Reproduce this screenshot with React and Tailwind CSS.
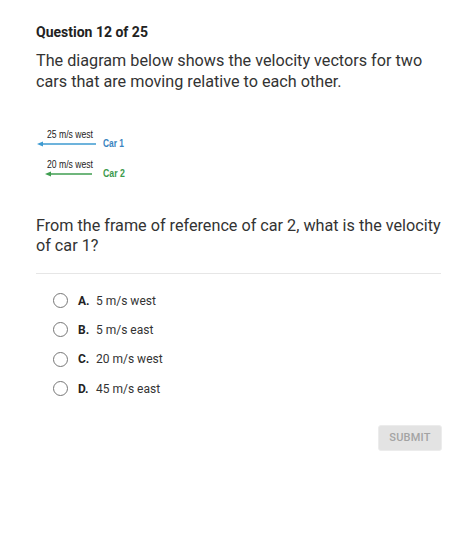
import React from "react";

const options = [
  { k: "A.", t: "5 m/s west" },
  { k: "B.", t: "5 m/s east" },
  { k: "C.", t: "20 m/s west" },
  { k: "D.", t: "45 m/s east" },
];

function Diagram() {
  return (
    <svg width="110" height="60" viewBox="0 0 110 60" className="block -ml-[6px] mt-[29px]" style={{ fontFamily: "'Liberation Sans', Arial, sans-serif" }}>
      <text x="17" y="17" fontSize="10" fill="#222" textLength="46" lengthAdjust="spacingAndGlyphs">25 m/s west</text>
      <line x1="11" y1="23" x2="66" y2="23" stroke="#3d9ad1" strokeWidth="1.3" />
      <polygon points="7,23 13,20.5 13,25.5" fill="#3d9ad1" />
      <text x="73" y="26" fontSize="10.5" fontWeight="bold" fill="#3a84c0" textLength="21" lengthAdjust="spacingAndGlyphs">Car 1</text>

      <text x="17" y="46.5" fontSize="10" fill="#222" textLength="46" lengthAdjust="spacingAndGlyphs">20 m/s west</text>
      <line x1="19" y1="53" x2="62" y2="53" stroke="#3f9e50" strokeWidth="1.3" />
      <polygon points="15,53 21,50.5 21,55.5" fill="#3f9e50" />
      <text x="73" y="56" fontSize="10.5" fontWeight="bold" fill="#3c9a4e" textLength="22" lengthAdjust="spacingAndGlyphs">Car 2</text>
    </svg>
  );
}

export default function App() {
  return (
    <div className="w-[474px] h-[540px] bg-white pl-[36px] pr-[33px] pt-[22px]" style={{ fontFamily: "Roboto, 'Liberation Sans', sans-serif" }}>
      <div className="text-[14px] leading-[20px] font-bold text-[#222]">Question 12 of 25</div>
      <p className="mt-[9px] text-[16.2px] leading-[20.5px] text-[#333]">
        The diagram below shows the velocity vectors for two cars that are moving relative to each other.
      </p>
      <Diagram />
      <p className="mt-[35px] text-[16.2px] leading-[20px] text-[#333]">
        From the frame of reference of car 2, what is the velocity of car 1?
      </p>
      <div className="mt-[17px] border-t border-[#e6e6e6]" />
      <div className="mt-[12px] flex flex-col">
        {options.map((o) => (
          <div key={o.k} className="h-[29.33px] flex items-center pl-[17px]">
            <span className="w-[15px] h-[15px] rounded-full border-[1.5px] border-[#777] shrink-0" />
            <span className="ml-[10px] w-[18px] text-[12px] font-bold text-[#222]">{o.k}</span>
            <span className="text-[12px] text-[#333]">{o.t}</span>
          </div>
        ))}
      </div>
      <div className="mt-[22px] flex justify-end">
        <div className="w-[64px] h-[26px] mr-[-1px] rounded-[3px] bg-[#e3e3e3] border border-[#ececec] flex items-center justify-center text-[11px] font-medium tracking-[0.2px] text-[#a3a3a3]">
          SUBMIT
        </div>
      </div>
    </div>
  );
}
